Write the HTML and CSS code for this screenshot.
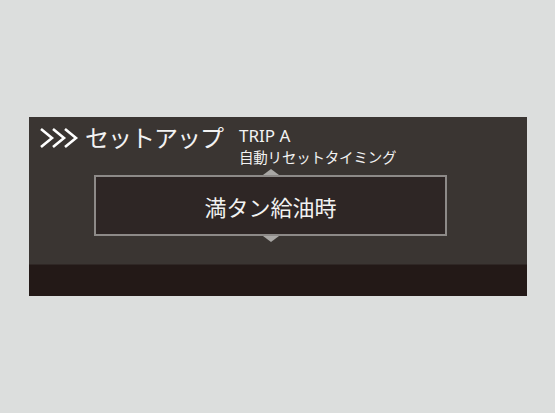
FILE: index.html
```html
<!DOCTYPE html>
<html lang="ja">
<head>
  <meta charset="utf-8">
  <title>セットアップ</title>
  <link rel="stylesheet" href="styles.css">
</head>
<body>
  <div class="panel">
    <div class="main">
      <div class="header">
        <svg class="chevrons" width="42" height="22" viewBox="0 0 42 22">
          <polyline points="2,2 13,11 2,20" />
          <polyline points="14,2 25,11 14,20" />
          <polyline points="26,2 37,11 26,20" />
        </svg>
        <span class="title">セットアップ</span>
        <div class="sub">
          <div class="trip">TRIP A</div>
          <div class="label">自動リセットタイミング</div>
        </div>
      </div>
      <div class="select">
        <span class="arrow up"></span>
        <span class="value">満タン給油時</span>
        <span class="arrow down"></span>
      </div>
    </div>
    <div class="band"></div>
  </div>
</body>
</html>
```

FILE: styles.css
```css
body {
  margin: 0;
  padding: 117px 0 0 29px;
  background-color: #dcdedd;
  font-family: "Noto Sans CJK JP", "Noto Sans", sans-serif;
  color: #f2f2f2;
}
.panel {
  width: 498px;
  height: 179px;
  display: flex;
  flex-direction: column;
  background-color: #3a3532;
  box-shadow: 0 1px 0 #b8b8b8;
}
.main {
  height: 147px;
}
.header {
  display: flex;
  align-items: flex-start;
  padding: 8px 0 0 10px;
}
.chevrons {
  margin-top: 2px;
  fill: none;
  stroke: #fff;
  stroke-width: 2.6;
}
.title {
  font-size: 24px;
  line-height: 24px;
  margin-left: 4px;
  letter-spacing: -1px;
}
.sub {
  margin-left: 16px;
}
.trip {
  font-family: "Noto Sans", sans-serif;
  font-size: 17px;
  line-height: 22px;
}
.label {
  font-size: 14.5px;
  line-height: 20px;
  letter-spacing: -0.2px;
}
.select {
  position: relative;
  margin: 8px 0 0 65px;
  width: 349px;
  height: 57px;
  border: 2px solid #8d8a88;
  background-color: #2e2625;
  display: flex;
  align-items: center;
  justify-content: center;
}
.value {
  font-size: 22px;
}
.arrow {
  position: absolute;
  left: 167px;
  width: 0;
  height: 0;
  border-left: 8px solid transparent;
  border-right: 8px solid transparent;
}
.arrow.up {
  top: -8px;
  border-bottom: 6px solid #a9a7a5;
}
.arrow.down {
  bottom: -8px;
  border-top: 6px solid #a9a7a5;
}
.band {
  flex: 1;
  background-color: #231917;
  border-top: 1px solid #2f2725;
}
```
